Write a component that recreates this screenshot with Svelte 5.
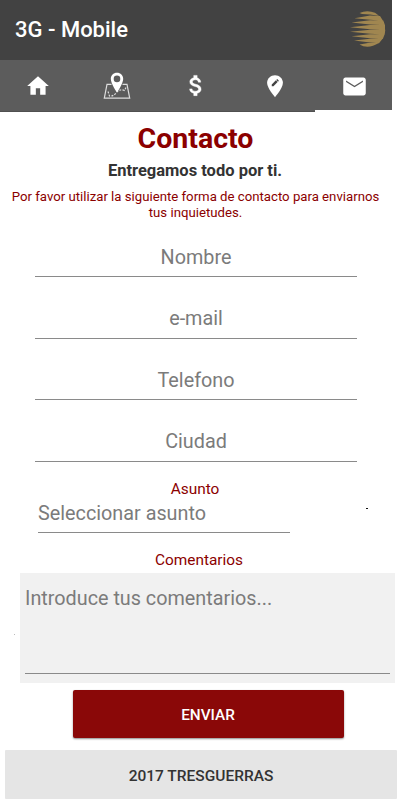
<script>
	const tabs = ['home', 'map', 'rates', 'branch', 'contact'];
	const fields = [
		{ name: 'nombre', type: 'text', placeholder: 'Nombre' },
		{ name: 'email', type: 'email', placeholder: 'e-mail' },
		{ name: 'telefono', type: 'tel', placeholder: 'Telefono' },
		{ name: 'ciudad', type: 'text', placeholder: 'Ciudad' }
	];
	let active = 'contact';

	const selectTab = tab => {
		active = tab;
	}
</script>

<div class="app">
	<header class="toolbar">
		<h1>3G - Mobile</h1>
		<svg class="logo" width="36" height="36" viewBox="0 0 36 36">
			<path d="M9.500 2Q17-1.500 25 1.800L29 4.800 20 3.400 12 3zM4.500 7.300L20 4.500 30 5 33 9.800 20 8.700zM1.500 11.600L20 9.300 33.300 9.500 35 14.300 20 13.400zM0 16.200L20 14 35 14V18.900L20 18.200zM0 20.700L20 18.800 35.300 18.700 34.700 23.500 20 22.700zM1.500 25.200L20 23.300 34.700 23.300 32.800 28 20 27.200zM4 29.500L20 27.800 32.600 27.800 29 32.200 20 31.400zM9.500 33.500L18 32 29 32Q18 38.500 9.500 33.500z" />
		</svg>
	</header>
	<nav class="tabs">
		{#each tabs as tab}
			<button class="tab" class:active={active === tab} aria-label={tab} on:click={() => selectTab(tab)}>
				{#if tab === 'home'}
					<svg width="26" height="26" viewBox="0 0 24 24">
						<path d="M10 20v-6h4v6h5v-8h3L12 3 2 12h3v8z" />
					</svg>
				{:else if tab === 'map'}
					<svg width="28" height="28" viewBox="0 0 28 28">
						<path class="line" d="M8.500 12.300H4L1.300 26.200h25.400L24 12.300h-4.500" />
						<path class="dash" d="M5 19.500l1.500 4.500q4 .5 7-3.500t8-2l2-4" />
						<path fill-rule="evenodd" d="M14 .8c-3.600 0-6.200 2.700-6.200 6.200C7.800 11.500 14 20.500 14 20.500S20.200 11.500 20.200 7C20.200 3.500 17.600.8 14 .8zM14 3.600a3.300 3.300 0 1 1 0 6.600 3.300 3.300 0 0 1 0-6.600z" />
					</svg>
				{:else if tab === 'rates'}
					<svg class="rates" width="28" height="27" viewBox="0 0 24 24">
						<path d="M11.800 10.900c-2.270-.59-3-1.200-3-2.150 0-1.090 1.010-1.850 2.700-1.850 1.780 0 2.440.85 2.500 2.100h2.210c-.07-1.720-1.120-3.300-3.210-3.810V3h-3v2.160c-1.940.42-3.500 1.680-3.500 3.610 0 2.310 1.910 3.460 4.700 4.130 2.500.6 3 1.480 3 2.410 0 .69-.49 1.790-2.700 1.790-2.060 0-2.870-.92-2.980-2.100h-2.200c.12 2.190 1.760 3.420 3.680 3.830V21h3v-2.150c1.950-.37 3.500-1.500 3.500-3.550 0-2.840-2.430-3.810-4.700-4.400z" />
					</svg>
				{:else if tab === 'branch'}
					<svg width="26" height="26" viewBox="0 0 24 24">
						<path d="M12 2C8 2 4.700 5.100 4.700 9.100 4.700 14.300 12 22.300 12 22.300S19.300 14.300 19.300 9.100C19.300 5.100 16 2 12 2z" />
						<path class="pencil" d="M9 12.200V10.600l3.800-3.800 1.600 1.600-3.800 3.800zM13.200 6.400l.8-.8 1.600 1.600-.8.8z" />
					</svg>
				{:else}
					<svg width="27" height="27" viewBox="0 0 24 24">
						<path d="M20 4H4c-1.100 0-1.990.9-1.990 2L2 18c0 1.100.9 2 2 2h16c1.100 0 2-.9 2-2V6c0-1.100-.9-2-2-2zm-.5 4L12 12.700 4.500 8V6.600L12 11.300l7.500-4.700z" />
					</svg>
				{/if}
			</button>
		{/each}
	</nav>

	<main>
		<h2>Contacto</h2>
		<h3>Entregamos todo por ti.</h3>
		<p class="intro">Por favor utilizar la siguiente forma de contacto para enviarnos<br />tus inquietudes.</p>

		<form on:submit|preventDefault>
			{#each fields as field}
				<input class="field" type={field.type} name={field.name} placeholder={field.placeholder} />
			{/each}

			<label class="asunto" for="asunto">Asunto</label>
			<div class="subject">
				<input id="asunto" type="text" placeholder="Seleccionar asunto" />
				<span class="dot"></span>
			</div>

			<label class="comentarios" for="comentarios">Comentarios</label>
			<div class="comments">
				<span class="speck"></span>
				<textarea id="comentarios" placeholder="Introduce tus comentarios..."></textarea>
			</div>

			<button class="send" type="submit">ENVIAR</button>
		</form>
	</main>

	<footer>2017 TRESGUERRAS</footer>
</div>

<style>
	:global(body) {
		background: #fff;
	}
	.app {
		width: 401px;
		height: 800px;
		overflow: hidden;
		font-family: Roboto, sans-serif;
		color: #333;
	}
	h1, h2, h3, p {
		margin: 0;
	}
	input, textarea, button {
		box-sizing: border-box;
		font-family: inherit;
		border: 0;
		border-radius: 0;
		padding: 0;
		margin: 0;
		background: none;
		outline: none;
	}
	.toolbar {
		display: flex;
		align-items: center;
		justify-content: space-between;
		box-sizing: border-box;
		width: 392px;
		height: 60px;
		padding: 0 6px 2px 15px;
		background: #424242;
	}
	h1 {
		font-size: 22px;
		font-weight: 500;
		line-height: 26px;
		color: #fff;
		padding-top: 2px;
	}
	.logo {
		fill: #a08650;
	}
	.tabs {
		display: flex;
		width: 392px;
		height: 52px;
		background: #5c5c5c;
	}
	.tab {
		flex: 0 0 78.75px;
		display: flex;
		align-items: center;
		justify-content: center;
		padding-right: 3px;
		border-bottom: 1px solid #505050;
	}
	.tab:nth-child(3) {
		padding-right: 2px;
	}
	.tab:nth-child(4) {
		padding-right: 1px;
	}
	.tab:last-child {
		flex: 1;
		padding: 2px 0 0 1px;
	}
	.tab.active {
		border-bottom: 2px solid #fff;
	}
	.tab svg {
		flex: none;
		fill: #fff;
	}
	.tab .line {
		fill: none;
		stroke: #ddd;
		stroke-width: 1.2;
	}
	.tab .dash {
		fill: none;
		stroke: #ddd;
		stroke-width: 1.2;
		stroke-dasharray: 2 1.3;
	}
	.tab .rates {
		stroke: #fff;
		stroke-width: 0.4;
	}
	.tab .pencil {
		fill: #444;
	}
	main {
		text-align: center;
	}
	h2 {
		width: 391px;
		padding-top: 9px;
		font-size: 28.5px;
		line-height: 36px;
		font-weight: 700;
		color: #8b0000;
	}
	h3 {
		width: 390px;
		padding-top: 4px;
		font-size: 16.5px;
		line-height: 20px;
		font-weight: 700;
	}
	.intro {
		width: 391px;
		padding-top: 8px;
		font-size: 13.2px;
		line-height: 15.5px;
		color: #8b0000;
		white-space: nowrap;
	}
	form {
		display: flex;
		flex-direction: column;
		padding-top: 16px;
	}
	.field {
		width: 322px;
		height: 41px;
		margin: 0 0 20.6px 35px;
		padding-top: 2px;
		border-bottom: 1px solid #8a8a8a;
		font-size: 19.8px;
		text-align: center;
	}
	::placeholder {
		color: #7b7b7b;
		opacity: 1;
	}
	label {
		width: 390px;
		font-size: 15.4px;
		line-height: 20px;
		color: #8b0000;
	}
	.asunto {
		margin-top: -3px;
	}
	.subject {
		display: flex;
		width: 330px;
		margin-left: 38px;
	}
	.subject input {
		width: 252px;
		height: 34px;
		padding-bottom: 4px;
		border-bottom: 1px solid #8a8a8a;
		font-size: 19.8px;
	}
	.dot {
		width: 2px;
		height: 1px;
		margin: 9px 0 0 76px;
		background: #111;
	}
	.comentarios {
		width: 398px;
		margin-top: 17px;
	}
	.comments {
		position: relative;
		box-sizing: border-box;
		width: 375px;
		height: 110px;
		margin: 3px 0 0 20px;
		padding: 0 5px;
		background: #f1f1f1;
	}
	.speck {
		position: absolute;
		left: -6px;
		top: 61px;
		width: 1px;
		height: 1px;
		background: #bbb;
	}
	textarea {
		display: block;
		width: 365px;
		height: 101px;
		padding-top: 14px;
		resize: none;
		border-bottom: 1px solid #8a8a8a;
		font-size: 19.8px;
		line-height: 24px;
	}
	.send {
		width: 271px;
		height: 48px;
		margin: 7px 0 0 73px;
		padding: 2px 1px 0 0;
		border-radius: 2px;
		background: #8a0808;
		box-shadow: 0 1px 2px rgba(0, 0, 0, 0.45);
		color: #fff;
		font-size: 15.3px;
		font-weight: 500;
	}
	footer {
		width: 392px;
		height: 49px;
		margin: 12px 0 0 5px;
		border-radius: 1px;
		background: #e5e5e5;
		font-size: 15.5px;
		font-weight: 500;
		line-height: 52px;
		text-align: center;
	}
</style>
